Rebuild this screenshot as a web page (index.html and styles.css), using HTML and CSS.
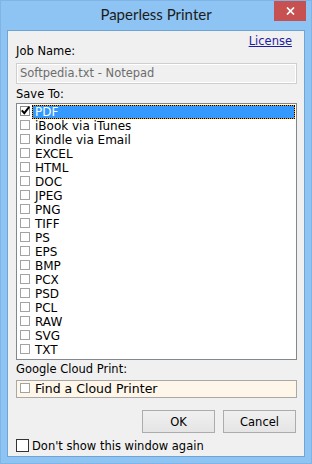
FILE: index.html
```html
<!DOCTYPE html>
<html lang="en">
<head>
    <meta charset="UTF-8">
    <meta name="viewport" content="width=device-width, initial-scale=1.0">
    <title>Paperless Printer</title>
    <link rel="stylesheet" href="styles.css">
</head>
<body>
    <div class="window">
        <div class="titlebar">
            <span class="title">Paperless Printer</span>
            <span class="close-btn">
                <svg width="9" height="8" viewBox="0 0 9 8"><path d="M1 0.5 L8 7.5 M8 0.5 L1 7.5" stroke="#fff" stroke-width="1.7" fill="none"/></svg>
            </span>
        </div>

        <div class="client">
            <div class="head-row">
                <span class="label job-label">Job Name:</span>
                <a href="#" class="license">License</a>
            </div>
            <div class="textbox">Softpedia.txt - Notepad</div>

            <div class="label save-label">Save To:</div>
            <ul class="format-list">
                <li class="item selected">
                    <span class="box">
                        <svg width="9" height="9" viewBox="0 0 9 9"><path d="M0.8 4.4 L3.3 7.2 L8.2 0.9" stroke="#000" stroke-width="2" fill="none"/></svg>
                    </span>
                    <span class="name">PDF</span>
                </li>
                <li class="item"><span class="box"></span><span class="name">iBook via iTunes</span></li>
                <li class="item"><span class="box"></span><span class="name">Kindle via Email</span></li>
                <li class="item"><span class="box"></span><span class="name">EXCEL</span></li>
                <li class="item"><span class="box"></span><span class="name">HTML</span></li>
                <li class="item"><span class="box"></span><span class="name">DOC</span></li>
                <li class="item"><span class="box"></span><span class="name">JPEG</span></li>
                <li class="item"><span class="box"></span><span class="name">PNG</span></li>
                <li class="item"><span class="box"></span><span class="name">TIFF</span></li>
                <li class="item"><span class="box"></span><span class="name">PS</span></li>
                <li class="item"><span class="box"></span><span class="name">EPS</span></li>
                <li class="item"><span class="box"></span><span class="name">BMP</span></li>
                <li class="item"><span class="box"></span><span class="name">PCX</span></li>
                <li class="item"><span class="box"></span><span class="name">PSD</span></li>
                <li class="item"><span class="box"></span><span class="name">PCL</span></li>
                <li class="item"><span class="box"></span><span class="name">RAW</span></li>
                <li class="item"><span class="box"></span><span class="name">SVG</span></li>
                <li class="item"><span class="box"></span><span class="name">TXT</span></li>
            </ul>

            <div class="label cloud-label">Google Cloud Print:</div>
            <div class="cloud-box">
                <span class="box"></span>
                <span class="cloud-text">Find a Cloud Printer</span>
            </div>

            <div class="buttons">
                <button class="btn">OK</button>
                <button class="btn">Cancel</button>
            </div>

            <label class="dont-show">
                <span class="big-box"></span>
                <span class="label">Don't show this window again</span>
            </label>
        </div>
    </div>
</body>
</html>
```

FILE: styles.css
```css
body {
    margin: 0;
    padding: 0;
    font-family: "DejaVu Sans", Verdana, sans-serif;
    color: #000;
}

.window {
    position: relative;
    width: 312px;
    height: 464px;
    box-sizing: border-box;
    background-color: #8ec4f3;
    border: 1px solid #7fb5e6;
    padding: 0 6px 6px 6px;
    display: flex;
    flex-direction: column;
}

.titlebar {
    height: 29px;
    line-height: 27px;
    text-align: center;
    flex-shrink: 0;
}

.title {
    font-family: Lato, "Open Sans", sans-serif;
    font-size: 15px;
    color: #1b1b1b;
}

.close-btn {
    position: absolute;
    top: 0;
    right: 5px;
    width: 32px;
    height: 20px;
    background-color: #c75050;
    display: flex;
    align-items: center;
    justify-content: center;
}

.client {
    flex: 1;
    background-color: #f0f0f0;
    border: 1px solid #6fa4d7;
    padding: 3px 7px 0 8px;
    display: flex;
    flex-direction: column;
}

.label {
    font-size: 11.5px;
    line-height: 14px;
}

.head-row {
    display: flex;
    justify-content: space-between;
    align-items: flex-start;
    height: 24px;
}

.job-label {
    margin-top: 10px;
}

.license {
    font-size: 11.5px;
    line-height: 14px;
    color: #1e1e9e;
    text-decoration: underline;
    margin-right: 5px;
}

.textbox {
    margin-top: 5px;
    height: 19px;
    line-height: 19px;
    border: 1px solid #cfcfcf;
    box-shadow: inset 0 0 0 1px #fff;
    padding-left: 3px;
    font-size: 11.5px;
    color: #6d6d6d;
}

.save-label {
    margin-top: 3px;
}

.format-list {
    list-style: none;
    margin: 2px 0 0 0;
    padding: 1px 1px 0 3px;
    height: 254px;
    background-color: #fff;
    border: 1px solid #828790;
}

.item {
    display: flex;
    height: 14px;
    font-size: 12px;
}

.box {
    position: relative;
    width: 10px;
    height: 10px;
    box-sizing: border-box;
    margin-top: 1px;
    border: 1px solid #a3a3a3;
    background-color: #fff;
    flex-shrink: 0;
}

/* check mark spills a little over the box edge, like the native one */
.item .box svg {
    position: absolute;
    left: 0;
    top: -1px;
}

.name {
    flex: 1;
    margin-left: 2px;
    padding: 1px 0 0 2px;
    line-height: 11px;
    border: 1px solid transparent;
    white-space: nowrap;
}

.item.selected .box {
    border-color: #8a8a8a;
}

.item.selected .name {
    color: #fff;
    border: 1px dotted #000;
    background: linear-gradient(#3399ff, #3399ff) padding-box, linear-gradient(#f39a1e, #f39a1e) border-box;
}

.cloud-label {
    margin-top: 2px;
}

.cloud-box {
    margin-top: 4px;
    height: 16px;
    border: 1px solid #a8a8a8;
    background-color: #fdf6e9;
    display: flex;
    align-items: flex-start;
    padding-left: 3px;
}

.cloud-box .box {
    margin-top: 2px;
}

.cloud-text {
    font-size: 12.5px;
    line-height: 16px;
    margin-left: 5px;
}

.buttons {
    margin-top: 12px;
    display: flex;
    justify-content: flex-end;
    gap: 8px;
    padding-right: 1px;
}

.btn {
    width: 73px;
    height: 23px;
    padding: 0;
    border: 1px solid #acacac;
    background: linear-gradient(#f0f0f0, #e5e5e5);
    font-family: "DejaVu Sans", Verdana, sans-serif;
    font-size: 11.5px;
    color: #000;
}

.dont-show {
    margin-top: 6px;
    display: flex;
    align-items: center;
    gap: 3px;
    height: 13px;
}

.big-box {
    width: 13px;
    height: 13px;
    box-sizing: border-box;
    border: 1px solid #333;
    background-color: #fff;
}
```
